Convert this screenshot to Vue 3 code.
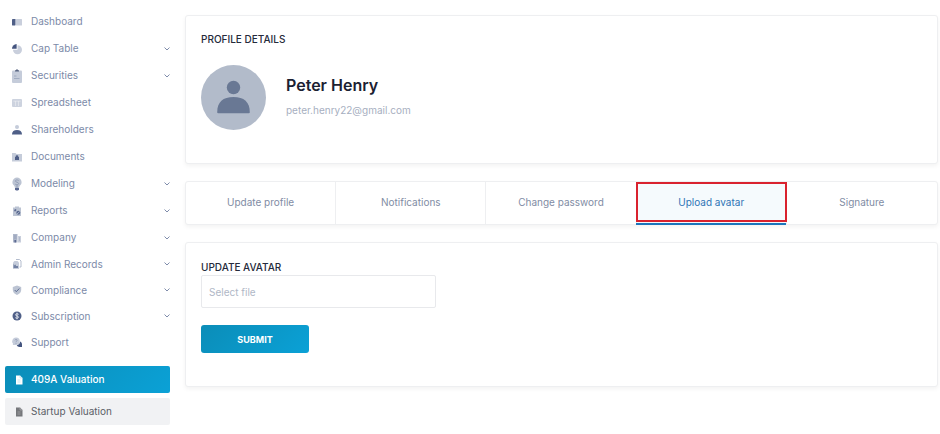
<script setup>
import { ref } from 'vue'

const groups = [
  {
    name: 'main',
    items: [
      { label: 'Dashboard', icon: 'dashboard' },
      { label: 'Cap Table', icon: 'pie', sub: true },
      { label: 'Securities', icon: 'clipboard', sub: true },
      { label: 'Spreadsheet', icon: 'sheet' },
      { label: 'Shareholders', icon: 'person' },
      { label: 'Documents', icon: 'folder' },
      { label: 'Modeling', icon: 'bulb', sub: true },
      { label: 'Reports', icon: 'report', sub: true },
      { label: 'Company', icon: 'building', sub: true }
    ]
  },
  {
    name: 'admin',
    items: [
      { label: 'Admin Records', icon: 'records', sub: true },
      { label: 'Compliance', icon: 'shield', sub: true },
      { label: 'Subscription', icon: 'coin', sub: true },
      { label: 'Support', icon: 'chat' }
    ]
  }
]

const tabs = ['Update profile', 'Notifications', 'Change password', 'Upload avatar', 'Signature']
const active = ref('Upload avatar')
const fileName = ref('')
</script>

<template>
  <div class="page">
    <aside class="sidebar">
      <nav>
        <ul v-for="g in groups" :key="g.name" :class="['menu', g.name]">
          <li v-for="item in g.items" :key="item.label">
            <a href="#" class="item">
              <svg class="icon" viewBox="0 0 12 16" aria-hidden="true">
                <g v-if="item.icon === 'dashboard'">
                  <rect x="1" y="5" width="3.500" height="6.500" rx="0.4" fill="#4f5f87" />
                  <rect x="5" y="5" width="6" height="6.500" rx="0.5" fill="#c9cfdc" />
                </g>
                <g v-else-if="item.icon === 'pie'">
                  <path d="M6.500 4.200A4.500 4.500 0 1 1 2 8.700h4.500z" fill="#c9cfdc" />
                  <path d="M5.600 3v4.800H1A4.700 4.700 0 0 1 5.600 3z" fill="#44557f" />
                </g>
                <g v-else-if="item.icon === 'clipboard'">
                  <rect x="1" y="2.500" width="10" height="12.500" rx="1" fill="#c5ccda" />
                  <path d="M4 3.500V2.200h1a1 1 0 0 1 2 0h1v1.300z" fill="#5b6784" />
                  <path d="M3 8h2.500M3 10.500h5.500" stroke="#98a3ba" stroke-width="0.8" />
                </g>
                <g v-else-if="item.icon === 'sheet'">
                  <rect x="1" y="4" width="10" height="8" rx="1" fill="#cdd3df" />
                  <path d="M2.500 6.200h7M4.500 6v5M7.500 6v5" stroke="#eef0f4" stroke-width="0.6" />
                </g>
                <g v-else-if="item.icon === 'person'">
                  <circle cx="6" cy="5" r="2" fill="#c5ccda" />
                  <path d="M1 12.500c0-3 2-4.400 5-4.400s5 1.400 5 4.400z" fill="#4f5f87" />
                </g>
                <g v-else-if="item.icon === 'folder'">
                  <path d="M1 4h3.500l1 1H11v7.500H1z" fill="#c5ccda" />
                  <path d="M4 8h.6V7.600a1.400 1.400 0 0 1 2.800 0V8H8v3H4z" fill="#4f5f87" />
                </g>
                <g v-else-if="item.icon === 'bulb'">
                  <path d="M6 1.500a4.700 4.700 0 0 1 2.600 8.500L8 12H4l-.6-2A4.700 4.700 0 0 1 6 1.500z" fill="#bcc4d3" />
                  <path d="M7.700 4.500C6 3.500 4.200 4 4.400 5.200 4.600 6.500 7.600 6 7.600 7.500 7.600 8.900 5.500 8.900 4.200 8.200M6 8.500V12" fill="none" stroke="#8b97b1" stroke-width="0.8" />
                  <path d="M4 12h4v1.500l-1 1H5l-1-1z" fill="#5b6991" />
                </g>
                <g v-else-if="item.icon === 'report'">
                  <path d="M2 4.500h2V3.500h4v1h2V13H2z" fill="#bcc4d3" />
                  <path d="M5.200 6v2.300H3A2.200 2.200 0 0 1 5.200 6z" fill="#5b6991" />
                  <circle cx="7.300" cy="9.800" r="2" fill="#5b6b91" />
                  <path d="M6 11l2.700-2.400" stroke="#dce1ea" stroke-width="0.6" />
                </g>
                <g v-else-if="item.icon === 'building'">
                  <path d="M2 4h4.500v8.500H2z" fill="#aeb7ca" />
                  <path d="M7 6h3v6.500H7z" fill="#c9cfdc" />
                  <path d="M3 6h2.500M3 8h2.500M8 8h1M8 10h1" stroke="#8b97b1" stroke-width="0.7" />
                  <path d="M3.400 10h1.700v2.500H3.400z" fill="#5b6991" />
                </g>
                <g v-else-if="item.icon === 'records'">
                  <path d="M5 3.500h3.500L10 5v6H8.500" fill="none" stroke="#b4bdce" />
                  <path d="M3.500 5h3L8 6.500V13H2V6.500z" fill="#c5ccda" />
                  <path d="M2.500 12V8l1.500 1.500L5 8.300V10h2v2z" fill="#7281a3" />
                </g>
                <g v-else-if="item.icon === 'shield'">
                  <path d="M6 3.500L10.200 5v3c0 2.300-1.700 4-4.200 5-2.500-1-4.200-2.700-4.200-5V5z" fill="#bcc4d3" />
                  <path d="M3.700 8l1.600 1.700 3-3.200" fill="none" stroke="#5b6b91" />
                </g>
                <g v-else-if="item.icon === 'coin'">
                  <circle cx="6" cy="8" r="4.500" fill="#4f5f87" />
                  <path d="M7.700 6.300C6.500 5.500 4.500 5.700 4.500 6.900 4.500 8.200 7.500 7.700 7.500 9.100 7.500 10.400 5.400 10.500 4.300 9.700M6 4.700v6.600" fill="none" stroke="#e6eaf1" stroke-width="0.9" />
                </g>
                <g v-else>
                  <path d="M9 7.500c1.500.5 2 1.700 2 3V13H8.500A3 3 0 0 1 5.700 11C7.500 11 9 9.500 9 7.500z" fill="#44557f" />
                  <path d="M5 3.500a3.800 3.800 0 1 1 0 7.600H1.800L2 9.700A3.800 3.800 0 0 1 5 3.500z" fill="#c5ccda" />
                  <path d="M4 6.300c.3-1.300 2.200-1 2.100.2C6 7.300 5 7.200 5 8.300M5 9v.8" fill="none" stroke="#8b97b1" stroke-width="0.8" />
                </g>
              </svg>
              <span>{{ item.label }}</span>
              <svg v-if="item.sub" class="chevron" viewBox="0 0 6 6" aria-hidden="true">
                <path d="M0.500 1.500l2.500 2.500 2.500-2.500" fill="none" stroke="#7f8cab" stroke-width="1" />
              </svg>
            </a>
          </li>
        </ul>
      </nav>
      <div class="products">
        <a href="#" class="product primary">
          <svg class="doc" viewBox="0 0 8 10" aria-hidden="true">
            <path d="M1 0.500h4l2.500 2.500v6.500H1z" fill="#fff" />
            <path d="M2.500 5h3M2.500 7h3M5 0.500V3h2.500" fill="none" stroke="#a9d6e6" stroke-width="0.6" />
          </svg>
          <span>409A Valuation</span>
        </a>
        <a href="#" class="product">
          <svg class="doc" viewBox="0 0 8 10" aria-hidden="true">
            <path d="M1 0.500h4l2.500 2.500v6.500H1z" fill="#75777b" />
            <path d="M2.500 5h3M2.500 7h3M5 0.500V3h2.500" fill="none" stroke="#b5b6b9" stroke-width="0.6" />
          </svg>
          <span>Startup Valuation</span>
        </a>
      </div>
    </aside>

    <main class="content">
      <section class="card profile">
        <h2 class="title">PROFILE DETAILS</h2>
        <div class="person">
          <svg class="avatar" viewBox="0 0 65 65" role="img" aria-label="Avatar">
            <circle cx="32.500" cy="32.500" r="32.500" fill="#b2bbca" />
            <circle cx="32.500" cy="22.500" r="6.700" fill="#697894" />
            <path d="M16.200 47.200C16.200 37 22 32 32.500 32s16.300 5 16.300 15.200q0 1-1 1H17.200q-1 0-1-1z" fill="#697894" />
          </svg>
          <div class="identity">
            <h1 class="name">Peter Henry</h1>
            <p class="email">peter.henry22@gmail.com</p>
          </div>
        </div>
      </section>

      <div class="card tabs" role="tablist">
        <button
          v-for="t in tabs"
          :key="t"
          type="button"
          role="tab"
          :aria-selected="t === active"
          :class="['tab', { active: t === active }]"
          @click="active = t"
        >{{ t }}</button>
      </div>

      <form class="card upload" @submit.prevent>
        <label class="title" for="avatar-file">UPDATE AVATAR</label>
        <input id="avatar-file" v-model="fileName" class="file" type="text" placeholder="Select file" />
        <button class="submit" type="submit">SUBMIT</button>
      </form>
    </main>
  </div>
</template>

<style>
body {
  background: #fff;
}
</style>

<style scoped>
* {
  box-sizing: border-box;
}
.page {
  display: grid;
  grid-template-columns: 170px 1fr;
  gap: 15px;
  padding-right: 2px;
  font-family: Inter, "Liberation Sans", sans-serif;
  font-size: 10px;
  line-height: 15px;
  color: #7c8aa8;
}
.sidebar {
  padding: 8px 0 8px 5px;
}
.menu {
  list-style: none;
  margin: 0;
  padding: 0;
}
.item {
  display: flex;
  align-items: center;
  height: 27px;
  padding: 0 0 0 6px;
  color: inherit;
  text-decoration: none;
}
.admin .item {
  height: 26px;
}
.icon {
  width: 12px;
  height: 16px;
  margin-right: 8px;
}
.chevron {
  width: 6px;
  height: 6px;
  margin-left: auto;
}
.products {
  display: grid;
  gap: 5px;
  margin-top: 11px;
}
.product {
  display: flex;
  align-items: center;
  gap: 8px;
  height: 27px;
  padding-left: 10px;
  border-radius: 2px;
  background: #f1f2f4;
  color: #5b5f67;
  text-decoration: none;
}
.product.primary {
  background: linear-gradient(135deg, #0b8db8, #0ba1d6);
  color: #fff;
  font-weight: 500;
}
.doc {
  width: 8px;
  height: 10px;
}
.content {
  display: flex;
  flex-direction: column;
  gap: 17px;
  padding-top: 15px;
  min-width: 0;
}
.card {
  border: 1px solid #eeeff1;
  border-radius: 3px;
  background: #fff;
  box-shadow: 0 2px 4px rgba(0, 0, 0, 0.05);
}
.profile {
  padding: 16px 15px 33px;
}
.title {
  display: block;
  margin: 0;
  font-size: 10px;
  line-height: 15px;
  font-weight: 500;
  color: #252a3b;
}
.person {
  display: flex;
  gap: 20px;
  margin-top: 18px;
}
.avatar {
  width: 65px;
  height: 65px;
}
.identity {
  padding-top: 8px;
}
.name {
  margin: 0;
  font-size: 16px;
  line-height: 24px;
  font-weight: 600;
  color: #1b2132;
}
.email {
  margin: 6px 0 0;
  color: #a7afbf;
}
.tabs {
  display: grid;
  grid-template-columns: repeat(5, 1fr);
}
.tab {
  position: relative;
  height: 42px;
  padding: 0 0 2px;
  border: 0;
  border-right: 1px solid #eeeff1;
  background: none;
  font: inherit;
  color: #818ca4;
}
.tab:last-child {
  border-right: 0;
}
.tab.active {
  background: #f5fafd;
  color: #2e75b5;
}
.tab.active::before {
  content: "";
  position: absolute;
  inset: 0 -1px 2px -1px;
  border: 2px solid #d9222e;
}
.tab.active::after {
  content: "";
  position: absolute;
  inset: auto 0 -1px -1px;
  height: 2px;
  background: #1b75bb;
}
.upload {
  display: flex;
  flex-direction: column;
  align-items: flex-start;
  padding: 17px 15px 33px;
}
.file {
  width: 235px;
  height: 33px;
  margin: 0 0 17px;
  padding: 0 7px;
  border: 1px solid #e8e9ec;
  border-radius: 2px;
  font: inherit;
  color: #44557f;
}
.file::placeholder {
  color: #b0b7c6;
  opacity: 1;
}
.submit {
  width: 108px;
  height: 28px;
  border: 0;
  border-radius: 3px;
  background: linear-gradient(135deg, #0b8db8, #0ba1d6);
  font: inherit;
  font-size: 9px;
  font-weight: 700;
  color: #fff;
}
</style>
